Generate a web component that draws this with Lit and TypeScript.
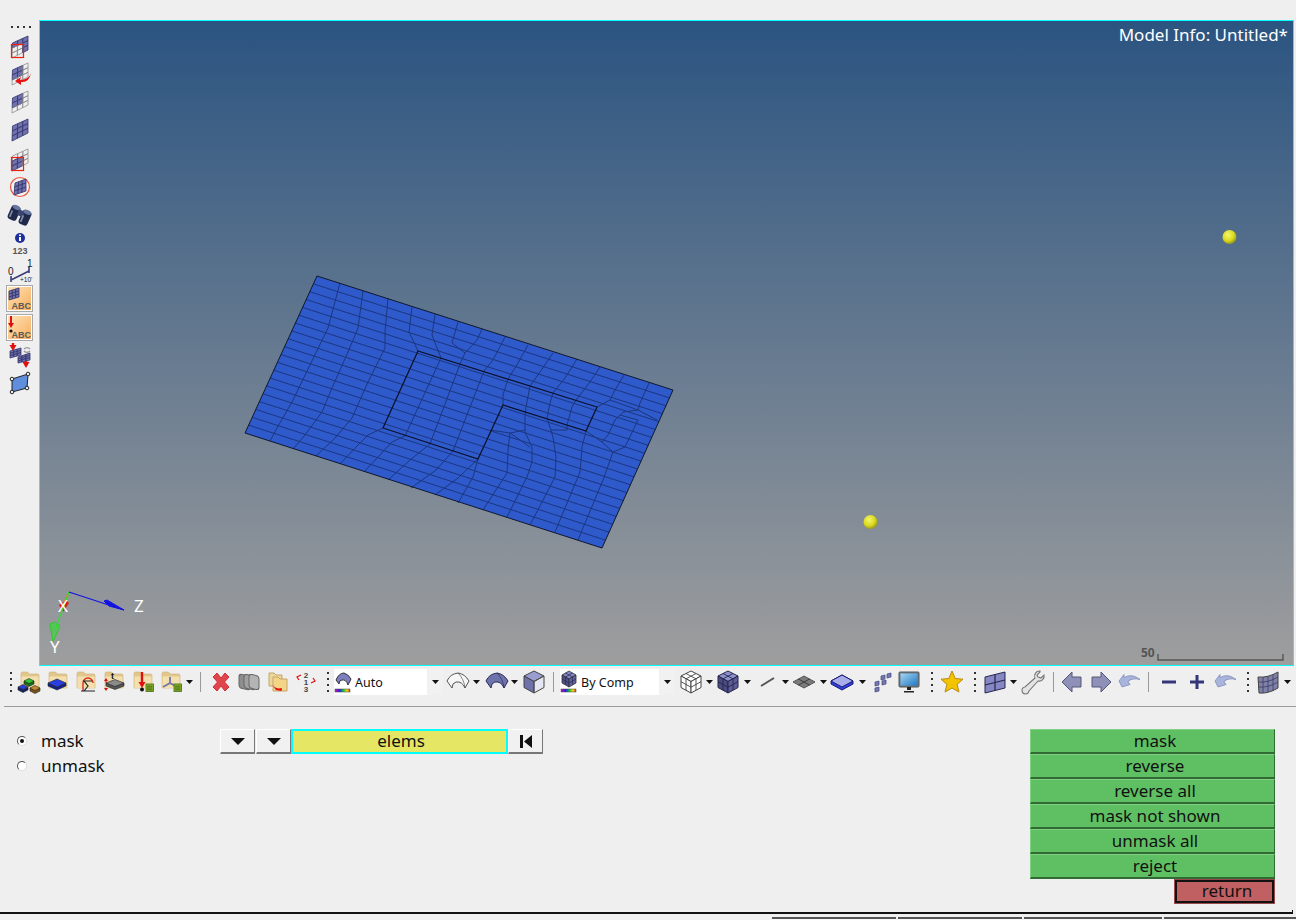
import { LitElement, html, css, svg } from "lit";
import { customElement } from "lit/decorators.js";

type Pt = [number, number];

// ---------- model canvas data (page coordinates) ----------
const QUAD: Pt[] = [[317, 276], [673, 390], [602, 548], [245, 433]];
const HOLE = "418,351 597,407 586,431 503,405 478,459 383,428";
const ROWS = 20;
const COLS = [
  "340,283 328,328 310,365 292,402 277,428 270,441",
  "363,291 358,328 348,352 332,388 322,412 305,435 293,449",
  "388,298 385,332 385,348 368,382 352,418 335,438 316,456",
  "412,307 409,332 418,351",
  "435,314 432,335 441,358",
  "458,322 452,343 465,353",
  "482,329 477,340 465,353 460,364",
  "505,337 493,360 484,371",
  "528,345 518,363 508,379 503,395 503,405",
  "553,353 540,372 530,386 526,407 525,415 525,432 532,447 532,462 527,477 507,517",
  "577,359 565,378 553,393 550,403 547,418 553,437 556,457 555,477 530,525",
  "600,367 590,382 576,400 572,407 567,425 567,430 550,430",
  "624,375 615,390 610,400 597,407",
  "649,383 640,403 638,410 623,412 615,420 608,435 602,442 613,452 603,480 578,540",
  "610,400 638,410 657,420",
  "638,420 620,415",
  "613,452 625,447 638,420",
  "602,442 586,431 582,447 580,472 555,532",
  "441,358 405,436",
  "460,364 430,444",
  "484,371 453,451",
  "383,428 368,435 358,445 340,464",
  "405,436 392,442 364,472",
  "430,444 410,460 388,480",
  "453,451 436,470 411,488",
  "478,459 458,478 435,495",
  "478,459 473,477 458,503",
  "490,430 510,433 508,450 507,473 483,510",
  "510,433 525,430",
  "510,433 530,447",
];

const lerp = (a: Pt, b: Pt, t: number): Pt => [a[0] + (b[0] - a[0]) * t, a[1] + (b[1] - a[1]) * t];

// ---------- icon helpers ----------
const MESH = "#6f71b0";
const MESH_LINE = "#34346a";

function patch(mask: string, q: Pt[] = [[6.5, 10], [22, 3], [22, 17], [6, 25]]) {
  const at = (u: number, v: number) => lerp(lerp(q[0], q[1], u), lerp(q[3], q[2], u), v);
  const cells = [];
  for (let r = 0; r < 3; r++) {
    for (let c = 0; c < 3; c++) {
      const on = mask[r * 3 + c] === "1";
      const pts = [at(c / 3, r / 3), at((c + 1) / 3, r / 3), at((c + 1) / 3, (r + 1) / 3), at(c / 3, (r + 1) / 3)];
      cells.push(svg`<polygon points=${pts.map((p) => p.join(",")).join(" ")}
        fill=${on ? MESH : "none"} stroke=${on ? MESH_LINE : "#8e8e8e"} stroke-width=".8"/>`);
    }
  }
  return cells;
}

function iso(top: string, left: string, right: string, line: string) {
  return svg`
    <polygon points="14,3 24,8 14,13.5 4,8" fill=${top} stroke=${line}/>
    <polygon points="4,8 14,13.5 14,25 4,19.5" fill=${left} stroke=${line}/>
    <polygon points="24,8 14,13.5 14,25 24,19.5" fill=${right} stroke=${line}/>`;
}

function isoGrid(top: string, left: string, right: string, line: string) {
  return svg`${iso(top, left, right, line)}
    <path d="M9 5.5 19 10.8M19 5.5 9 10.8M9 10.8V22.2M19 10.8V22.2M4 13.7 14 19.2 24 13.7" fill="none" stroke=${line} stroke-width=".9"/>`;
}

function slab(cx: number, cy: number, w: number, h: number, top: string, side: string, line = "#222") {
  const t = h / 2;
  return svg`
    <polygon points="${cx - w},${cy} ${cx},${cy + t} ${cx + w},${cy} ${cx + w},${cy + 3} ${cx},${cy + t + 3} ${cx - w},${cy + 3}" fill=${side} stroke=${line} stroke-width=".6"/>
    <polygon points="${cx - w},${cy} ${cx},${cy - t} ${cx + w},${cy} ${cx},${cy + t}" fill=${top} stroke=${line} stroke-width=".6"/>`;
}

const folderBack = svg`
  <path d="M6 5.5q0-1.5 1.5-1.5h5l2 2h8q1.500 0 1.500 1.500V20H6z" fill="#e2c78c" stroke="#cdb07a" stroke-width=".6"/>
  <path d="M6.500 8.500h17V20H6.500z" fill="#f4e0ae"/>`;

const greenList = svg`<rect x="18" y="16" width="7.500" height="7.500" fill="#8fb52c" stroke="#3f6a10" stroke-width=".8"/>
  <path d="M19 18.200h5.500M19 20h5.500M19 21.800h5.500" stroke="#2f5a10" stroke-width=".8"/>`;

const redDown = (x: number, y1: number, y2: number) => svg`
  <path d="M${x} ${y1}V${y2 - 5}" stroke="#e01010" stroke-width="2.400"/>
  <polygon points="${x - 3.500},${y2 - 6} ${x + 3.500},${y2 - 6} ${x},${y2}" fill="#e01010"/>`;

const icon = (body: unknown, w = 28, h = 28) =>
  html`<svg width=${w} height=${h} viewBox="0 0 ${w} ${h}">${body}</svg>`;

const caret = icon(svg`<polygon points="0,0 7,0 3.500,4" fill="#111"/>`, 7, 4);

const vdots = icon(svg`<path d="M3 1h2v2H3zM3 7h2v2H3zM3 13h2v2H3zM3 19h2v2H3z" fill="#333"/>`, 8, 22);

const orangeBox = (id: string, body: unknown) => icon(svg`
  <defs><linearGradient id=${id} x1="0" y1="0" x2="1" y2="1"><stop offset="0" stop-color="#fde3b8"/><stop offset="1" stop-color="#f9ae5e"/></linearGradient></defs>
  <rect x=".5" y=".5" width="26" height="26" fill="#fff" stroke="#a8a8a8"/>
  <rect x="2" y="2" width="23" height="23" fill="url(#${id})"/>
  ${body}
  <text x="25" y="24" text-anchor="end" class="abc">ABC</text>`, 28, 27);

const binoculars = icon(svg`
  <g transform="rotate(24 14 14)">
    <rect x="3" y="7" width="9.500" height="15" rx="3" fill="#20294a"/>
    <rect x="15" y="7" width="9.500" height="15" rx="3" fill="#20294a"/>
    <rect x="11" y="9" width="6" height="6" fill="#3b4670"/>
    <ellipse cx="7.700" cy="8.500" rx="4" ry="2.200" fill="#66769f"/>
    <ellipse cx="19.700" cy="8.500" rx="4" ry="2.200" fill="#66769f"/>
    <rect x="4.500" y="13" width="1.600" height="7" fill="#8190ae"/>
    <rect x="16.500" y="13" width="1.600" height="7" fill="#8190ae"/>
  </g>`);

const undoArrow = icon(svg`
  <path d="M4 13 9 6.500V9.500Q17 5 25 11.500 17 9.500 13 13.500L15 16.500 7 19z" fill="#a9b4dc" stroke="#7f8abb" stroke-width=".8"/>`);

const shell = (fill: string, line: string) => icon(svg`
  <path d="M3 13Q6 6 14 5 21 6 25 13L21 20Q18 13 12 14 8 15 8 20z" fill=${fill} stroke=${line}/>
  <path d="M14 5Q20 11 21 20" fill="none" stroke=${line} stroke-width=".7"/>`);

const colorbar = svg`<defs><linearGradient id="rb"><stop offset="0" stop-color="#e010c0"/><stop offset=".3" stop-color="#2020e0"/><stop offset=".55" stop-color="#10c040"/><stop offset=".8" stop-color="#f0e010"/><stop offset="1" stop-color="#f03010"/></linearGradient></defs>
  <rect x="1" y="19" width="15" height="3" fill="url(#rb)" stroke="#444" stroke-width=".5"/>`;

// ---------- left toolbar ----------
const redBox = svg`<rect x="5.500" y="11.500" width="12" height="13" fill="none" stroke="#ee2010" stroke-width="1.200"/>`;

const LEFT: { c: number; t: unknown }[] = [
  { c: 27, t: icon(svg`<path d="M5 1h2v2H5zM11 1h2v2h-2zM17 1h2v2h-2zM23 1h2v2h-2z" fill="#333"/>`, 28, 4) },
  { c: 47, t: icon(svg`${patch("111001001")}${redBox}`) },
  { c: 74, t: icon(svg`${patch("110110000")}
      <path d="M25 13Q23 20 14 20L15 17 9 21 15 25V22Q23 23 25 13z" fill="#e81010"/>`) },
  { c: 102, t: icon(patch("110110000")) },
  { c: 130, t: icon(patch("111111111")) },
  { c: 160, t: icon(svg`${patch("000110110")}${redBox}`) },
  { c: 187, t: icon(svg`<circle cx="14" cy="14" r="9.500" fill="#f2f2f2" stroke="#ee5540" stroke-width="1.200"/>
      ${patch("111111111", [[9, 10], [20, 6], [20, 18], [8, 22]])}`) },
  { c: 215, t: binoculars },
  { c: 245, t: icon(svg`<circle cx="14" cy="7" r="5" fill="#1c2f9a"/>
      <rect x="13" y="6" width="2" height="4" fill="#fff"/><rect x="13" y="3.500" width="2" height="1.500" fill="#fff"/>
      <text x="14" y="23" text-anchor="middle" class="n123">123</text>`) },
  { c: 273, t: icon(svg`
      <path d="M5 17V23M5 21 23 12M23 8V14" stroke="#3c3c78" stroke-width="1.600" fill="none"/>
      <text x="2" y="16" class="tiny">0</text><text x="21" y="8" class="tiny">1</text>
      <text x="14" y="23" class="tiny2">+10'</text>`) },
  { c: 298.5, t: orangeBox("o1", svg`
      ${patch("111111111", [[3, 6], [13, 3], [13, 12], [3, 15]])}`) },
  { c: 327, t: orangeBox("o2", svg`
      <path d="M5 2V10" stroke="#e01010" stroke-width="2"/><polygon points="2,9 8,9 5,14" fill="#e01010"/>
      <circle cx="5" cy="17" r="1.600" fill="#111"/>`) },
  { c: 354, t: icon(svg`
      ${patch("111111111", [[4, 11], [15, 8], [15, 15], [4, 18]])}
      ${patch("111111111", [[12, 17], [24, 13], [24, 20], [12, 23]])}
      ${redDown(7, 3, 11)}${redDown(20, 21, 28)}
      <path d="M18 9a4 4 0 0 1 6 0M24 11a4 4 0 0 1-6 0" fill="none" stroke="#999" stroke-width="1.400"/>`) },
  { c: 384, t: icon(svg`
      <polygon points="6,9 22,4 21,18 6,22" fill="#5f8fdc" stroke="#222"/>
      <circle cx="6" cy="9" r="1.800" fill="#eee" stroke="#222"/><circle cx="22" cy="4" r="1.800" fill="#eee" stroke="#222"/>
      <circle cx="21" cy="18" r="1.800" fill="#eee" stroke="#222"/><circle cx="6" cy="22" r="1.800" fill="#eee" stroke="#222"/>`) },
];

// ---------- bottom toolbar ----------
const combo = (label: string, ic: unknown) => html`
  <div class="combo">${ic}<span class="combo-label">${label}</span><span class="combo-arrow">${caret}</span></div>`;

const sep = html`<div class="sep"></div>`;

const BAR: { c: number; w: number; t: unknown }[] = [
  { c: 11, w: 8, t: vdots },
  { c: 29, w: 28, t: icon(svg`${folderBack}
      ${slab(8, 19, 5, 5, "#2a3fd8", "#14206a")}${slab(20, 20, 5, 5, "#c88a2c", "#7a5415")}${slab(14, 13, 5, 5, "#2fc82f", "#157015")}`) },
  { c: 57, w: 28, t: icon(svg`${folderBack}${slab(14, 15, 9, 8, "#2a3fe0", "#111f90")}`) },
  { c: 85, w: 28, t: icon(svg`${folderBack}
      <path d="M12 23V15a5 5 0 0 1 10 0" fill="none" stroke="#d83020" stroke-width="1.400"/>
      <path d="M10 23H24M13 23 17 18 13 13H21" fill="none" stroke="#222" stroke-width="1.200"/>`) },
  { c: 113, w: 28, t: icon(svg`${folderBack}
      <text x="12" y="11" class="t">t</text>
      ${slab(16, 15, 9, 7, "#8a8a8a", "#555")}
      <path d="M7 13v2M7 20v2" stroke="#d01010"/><polygon points="5,13 9,13 7,10" fill="#d01010"/><polygon points="5,20 9,20 7,23" fill="#d01010"/>`) },
  { c: 142, w: 29, t: icon(svg`${folderBack}${redDown(14, 4, 20)}<circle cx="14" cy="21.500" r="2" fill="#111"/>${greenList}`) },
  { c: 170, w: 28, t: icon(svg`${folderBack}
      <path d="M14 9V15L7 19M14 15 21 19" fill="none" stroke="#7274aa" stroke-width="1.800"/>${greenList}`) },
  { c: 189, w: 7, t: caret },
  { c: 200, w: 1, t: sep },
  { c: 221, w: 28, t: icon(svg`<path d="M6 9 10 5 14 10 18 5 22 9 17.500 14 22 19 18 23 14 18 10 23 6 19 10.500 14z" fill="#e0444c" stroke="#d03038"/>`) },
  { c: 249, w: 28, t: icon(svg`
      <g transform="skewY(12) translate(0 -3)">
        <rect x="4" y="8" width="11" height="14" rx="3" fill="#8e8e8e" stroke="#666"/>
        <rect x="9" y="7" width="11" height="14" rx="3" fill="#a0a0a0" stroke="#666"/>
        <rect x="14" y="6" width="10" height="14" rx="3" fill="#b4b4b4" stroke="#666"/>
      </g>`) },
  { c: 277, w: 28, t: icon(svg`
      <path d="M6 5h5l2 2h6v11H6z" fill="#ecd79a" stroke="#c4a56c"/>
      <path d="M10 9h5l2 2h7v12H10z" fill="#f4d486" stroke="#c4a56c"/>
      <path d="M8 14Q11 22 19 20L18.500 23 13 22 10 18z" fill="#e01010"/>`) },
  { c: 306, w: 30, t: icon(svg`
      <text x="14" y="9.500" class="num">2</text><text x="14" y="16.500" class="num">1</text><text x="14" y="24" class="num">3</text>
      <path d="M9 7 5 9l2 3M19 15l4-2-2-3" fill="none" stroke="#e01010" stroke-width="1.200"/>`) },
  { c: 328, w: 8, t: vdots },
  { c: 388.5, w: 109, t: combo("Auto", icon(svg`
      <path d="M2 10Q5 3 10 3 14 4 17 9L14 15Q12 9 8 10 5 10 5 14z" fill="#7b7fc0" stroke="#333"/>${colorbar}`, 18, 24)) },
  { c: 458, w: 28, t: shell("#f6f6f6", "#555") },
  { c: 476, w: 7, t: caret },
  { c: 497, w: 28, t: shell("#6f73ad", "#2b2b55") },
  { c: 514, w: 7, t: caret },
  { c: 533.5, w: 24, t: icon(svg`${iso("#9a9dd0", "#6f72a8", "#e6e6f2", "#444")}<path d="M14 13.500 24 8M14 25V13.500" stroke="#555"/>`) },
  { c: 553, w: 1, t: sep },
  { c: 617.5, w: 115, t: combo("By Comp", icon(svg`
      <polygon points="9,1 16,5 9,9 2,5" fill="#8487c0" stroke="#333" stroke-width=".8"/>
      <polygon points="2,5 9,9 9,17 2,13" fill="#4e4f86" stroke="#333" stroke-width=".8"/>
      <polygon points="16,5 9,9 9,17 16,13" fill="#5f61a0" stroke="#333" stroke-width=".8"/>
      <path d="M5.500 3 12.500 7M12.500 3 5.500 7M5.500 7V15M12.500 7V15M2 9l7 4 7-4" stroke="#2b2b55" stroke-width=".7" fill="none"/>${colorbar}`, 18, 24)) },
  { c: 691, w: 28, t: icon(isoGrid("#fff", "#fff", "#fff", "#444")) },
  { c: 709, w: 7, t: caret },
  { c: 728, w: 28, t: icon(isoGrid("#8e91cc", "#4a4b80", "#5c5d96", "#26264c")) },
  { c: 747, w: 7, t: caret },
  { c: 767, w: 28, t: icon(svg`<path d="M8 18 21 10" stroke="#555" stroke-width="2"/>`) },
  { c: 785, w: 7, t: caret },
  { c: 804, w: 28, t: icon(svg`<polygon points="3,14 14,8 25,14 14,20" fill="#7c7c7c" stroke="#555"/><path d="M8.500 11 19.500 17M19.500 11 8.500 17" stroke="#3c3c3c"/>`) },
  { c: 823, w: 7, t: caret },
  { c: 842, w: 28, t: icon(svg`
      <polygon points="3,13 14,7 25,13 25,16 14,22 3,16" fill="#2f3fe0" stroke="#1a1a70"/>
      <polygon points="3,13 14,7 25,13 14,19" fill="#a8adea" stroke="#1a1a70"/>`) },
  { c: 862, w: 7, t: caret },
  { c: 881, w: 28, t: icon(svg`<g fill="#7678b4" stroke="#44447a" stroke-width=".7">
      <polygon points="14,8 18,7 18,11 14,12"/><polygon points="20,6 24,5 24,9 20,10"/>
      <polygon points="8,14 12,13 12,17 8,18"/><polygon points="15,13 19,12 19,16 15,17"/>
      <polygon points="8,20 12,19 12,23 8,24"/></g>`) },
  { c: 909, w: 28, t: icon(svg`
      <defs><linearGradient id="scr" x1="0" y1="0" x2="1" y2="1"><stop offset="0" stop-color="#a6d6f2"/><stop offset="1" stop-color="#1f78c4"/></linearGradient></defs>
      <rect x="4" y="4" width="20" height="15" rx="1" fill="#6c7c88" stroke="#555"/>
      <rect x="5.500" y="5.500" width="17" height="12" fill="url(#scr)"/>
      <path d="M12 19h4v3h-4z" fill="#222"/><path d="M9 23h10v1.500H9z" fill="#222"/>`) },
  { c: 932, w: 8, t: vdots },
  { c: 952, w: 28, t: icon(svg`
      <polygon points="14,3 17.200,10.500 25,11.200 19,16.400 21,24 14,20 7,24 9,16.400 3,11.200 10.800,10.500" fill="#f4c400" stroke="#b88a10"/>`) },
  { c: 975, w: 8, t: vdots },
  { c: 995, w: 28, t: icon(svg`
      <polygon points="4,9 24,4 24,20 4,25" fill="#8688c4" stroke="#26264c"/>
      <path d="M14 6.500V22.500M4 17 24 12" stroke="#26264c" stroke-width="1.200"/>`) },
  { c: 1013, w: 7, t: caret },
  { c: 1033, w: 28, t: icon(svg`
      <path d="M21 3a5 5 0 0 0-5 7L6 19a3.500 3.500 0 1 0 4 4l9-10a5 5 0 0 0 6-6l-3 3-3-1-1-2 3-3z" fill="#e4e4e4" stroke="#777" stroke-width="1.100"/>`) },
  { c: 1053, w: 1, t: sep },
  { c: 1072, w: 28, t: icon(svg`<polygon points="4,14 14,4 14,9 23,9 23,19 14,19 14,24" fill="#8e90b8" stroke="#55577a"/>`) },
  { c: 1101, w: 28, t: icon(svg`<polygon points="24,14 14,4 14,9 5,9 5,19 14,19 14,24" fill="#8e90b8" stroke="#55577a"/>`) },
  { c: 1129, w: 28, t: undoArrow },
  { c: 1148, w: 1, t: sep },
  { c: 1169, w: 28, t: icon(svg`<rect x="7" y="12.500" width="14" height="3" fill="#34367a"/>`) },
  { c: 1197, w: 28, t: icon(svg`<path d="M7 12.500h5.500V7h3v5.500H21v3h-5.500V21h-3v-5.500H7z" fill="#34367a"/>`) },
  { c: 1225, w: 28, t: undoArrow },
  { c: 1248, w: 8, t: vdots },
  { c: 1268, w: 28, t: icon(svg`
      <path d="M4 9Q14 10 24 4V20Q14 26 5 25z" fill="#7f81a8" stroke="#444"/>
      <path d="M9 9V25M14 9V24M19 7V23M4.300 14Q14 15 24 9M4.600 19Q14 20 24 14" stroke="#3c3c60" stroke-width=".8" fill="none"/>`) },
  { c: 1287, w: 7, t: caret },
];

const GREEN = ["mask", "reverse", "reverse all", "mask not shown", "unmask all", "reject"];
const STATUS = [124, 124, 138, 132];

@customElement("app-root")
export class AppRoot extends LitElement {
  static styles = css`
    :host {
      display: block;
      width: 1296px;
      height: 920px;
      background: #efefef;
      font-family: "Noto Sans", sans-serif;
      font-size: 17px;
      color: #111;
      overflow: hidden;
    }
    .top {
      display: flex;
      height: 666px;
    }
    .side {
      width: 39px;
      flex: none;
      display: flex;
      flex-direction: column;
    }
    .side-cell {
      display: flex;
      justify-content: center;
      align-items: center;
      padding-left: 1px;
      flex: none;
    }
    .view {
      position: relative;
      width: 1253px;
      height: 644px;
      margin-top: 20px;
      border: 1px solid #0ff;
      background: linear-gradient(#2b5481, #9e9e9e);
      color: #fff;
    }
    .view svg {
      position: absolute;
      inset: 0;
    }
    .info {
      position: absolute;
      top: 3px;
      right: 5px;
      line-height: 22px;
    }
    .axis {
      position: absolute;
      line-height: 20px;
    }
    .ax-x { left: 18px; top: 575px; }
    .ax-z { left: 94px; top: 575px; }
    .ax-y { left: 10px; top: 616px; }
    .scale {
      position: absolute;
      left: 1101px;
      top: 624px;
      font-size: 12px;
      font-weight: 700;
      color: #555;
      line-height: 16px;
    }
    .bar {
      display: flex;
      align-items: center;
      height: 32px;
      margin-bottom: 8px;
    }
    .cell {
      display: flex;
      justify-content: center;
      align-items: center;
      flex: none;
      height: 32px;
    }
    .cell svg, .side-cell svg {
      flex: none;
      display: block;
    }
    .sep {
      width: 1px;
      height: 20px;
      background: #9a9a9a;
    }
    .combo {
      display: flex;
      align-items: center;
      width: 100%;
      height: 26px;
      background: #fff;
    }
    .combo-label {
      flex: 1;
      font-size: 12.5px;
      padding-left: 3px;
    }
    .combo-arrow {
      width: 16px;
      height: 26px;
      background: #f1f1f1;
      display: flex;
      align-items: center;
      justify-content: center;
    }
    .rule {
      height: 1px;
      background: #9c9c9c;
      margin-left: 4px;
    }
    .panel {
      display: flex;
      height: 205px;
    }
    .radios {
      width: 220px;
      flex: none;
      padding: 21px 0 0 17px;
      box-sizing: border-box;
    }
    .radio {
      display: flex;
      align-items: center;
      gap: 14px;
      height: 25px;
    }
    .dot {
      width: 10px;
      height: 10px;
      border-radius: 50%;
      background: #fff;
      box-sizing: border-box;
      border: 1px solid;
      border-color: #555 #ddd #ddd #555;
      display: flex;
      align-items: center;
      justify-content: center;
    }
    .dot.on::after {
      content: "";
      width: 4px;
      height: 4px;
      border-radius: 50%;
      background: #111;
    }
    .selector {
      display: flex;
      height: 25px;
      margin-top: 22px;
      flex: none;
    }
    .raised {
      width: 35px;
      box-sizing: border-box;
      background: #f1f1f1;
      border: 1px solid;
      border-color: #fff #777 #777 #fff;
      border-bottom-width: 2px;
      display: flex;
      align-items: center;
      justify-content: center;
    }
    .raised + .raised {
      margin-left: 1px;
    }
    .entity {
      width: 217px;
      box-sizing: border-box;
      border: 2px solid #0ff;
      background: #e6e665;
      text-align: center;
      line-height: 19px;
      padding-left: 3px;
    }
    .actions {
      margin: 22px 0 0 487px;
      width: 245px;
      flex: none;
    }
    .green, .red {
      box-sizing: border-box;
      height: 25px;
      text-align: center;
      line-height: 21px;
      border: 1px solid;
    }
    .green {
      background: #5fc063;
      border-color: #7fd080 #2f6b33 #2f6b33 #7fd080;
      border-bottom-width: 2px;
      padding-left: 5px;
    }
    .red {
      width: 101px;
      margin-left: auto;
      background: #c16062;
      border-color: #9a4a4c;
      outline: 2px solid #111;
      outline-offset: -3px;
      padding-left: 5px;
    }
    .baseline {
      height: 2px;
      margin-right: 3px;
      background: #111;
      position: relative;
    }
    .baseline::after {
      content: "";
      position: absolute;
      right: 0;
      top: -2px;
      width: 1px;
      height: 2px;
      background: #111;
    }
    .status {
      display: flex;
      justify-content: flex-end;
      gap: 2px;
      margin-top: 3px;
    }
    .status div {
      height: 3px;
      background: #f6f6f6;
      border-top: 2px solid #555;
    }
    .abc { font: 700 9px "Liberation Sans", sans-serif; fill: #5a5a5a; }
    .n123 { font: 700 9px "Liberation Sans", sans-serif; fill: #555; }
    .tiny { font: 10px "Liberation Sans", sans-serif; fill: #222; }
    .tiny2 { font: 6.500px "Liberation Sans", sans-serif; fill: #222; }
    .t { font: 700 9px "Liberation Sans", sans-serif; fill: #111; }
    .num { font: 700 8px "Liberation Sans", sans-serif; fill: #444; text-anchor: middle; }
  `;

  private renderMesh() {
    const rows = [];
    for (let i = 1; i < ROWS; i++) {
      const a = lerp(QUAD[0], QUAD[3], i / ROWS);
      const b = lerp(QUAD[1], QUAD[2], i / ROWS);
      rows.push(svg`<line x1=${a[0]} y1=${a[1]} x2=${b[0]} y2=${b[1]}/>`);
    }
    return html`<svg width="1253" height="644" viewBox="40 21 1253 644">
      <defs>
        <radialGradient id="ball" cx=".4" cy=".35" r=".7">
          <stop offset="0" stop-color="#f6f86a"/><stop offset=".6" stop-color="#d8d820"/><stop offset="1" stop-color="#8e8e18"/>
        </radialGradient>
      </defs>
      <polygon points=${QUAD.map((p) => p.join(",")).join(" ")} fill="#2f5acb"/>
      <g stroke="#1c3780" stroke-width="1" fill="none">
        ${rows}
        ${COLS.map((c) => svg`<polyline points=${c}/>`)}
      </g>
      <polygon points=${HOLE} fill="none" stroke="#0a0f26" stroke-width="1.200"/>
      <polygon points=${QUAD.map((p) => p.join(",")).join(" ")} fill="none" stroke="#10182e" stroke-width="1"/>
      <circle cx="1229.500" cy="237" r="7" fill="url(#ball)"/>
      <circle cx="870.500" cy="522" r="7" fill="url(#ball)"/>
      <path d="M66 600 59 605 63 612 69 603z" fill="#e01818"/>
      <path d="M69 592 62 607" stroke="#e08018" stroke-width="1.600"/>
      <path d="M69 592 55 630" stroke="#30e030" stroke-width="1.200"/>
      <path d="M55 622 60 626 53 642 50 624z" fill="#2ee02e" fill-opacity=".6" stroke="#20d020" stroke-width=".8"/>
      <path d="M69 592 124 610" stroke="#1414e0" stroke-width="1.200"/>
      <path d="M104 601 109 606 124 610 107 600z" fill="#1414e0" stroke="#1414e0"/>
      <path d="M1158 654V660H1283V654" fill="none" stroke="#555" stroke-width="1.400"/>
    </svg>`;
  }

  render() {
    let y = 0;
    let x = 0;
    return html`
      <div class="top">
        <div class="side">
          ${LEFT.map((it) => {
            const h = it.c === 27 ? 4 : 28;
            const gap = it.c - h / 2 - y;
            y = it.c + h / 2;
            return html`<div class="side-cell" style="margin-top:${gap}px;height:${h}px">${it.t}</div>`;
          })}
        </div>
        <div class="view">
          ${this.renderMesh()}
          <div class="info">Model Info: Untitled*</div>
          <div class="axis ax-x">X</div>
          <div class="axis ax-z">Z</div>
          <div class="axis ax-y">Y</div>
          <div class="scale">50</div>
        </div>
      </div>
      <div class="bar">
        ${BAR.map((it) => {
          const left = it.c - it.w / 2;
          const gap = left - x;
          x = left + it.w;
          return html`<div class="cell" style="margin-left:${gap}px;width:${it.w}px">${it.t}</div>`;
        })}
      </div>
      <div class="rule"></div>
      <div class="panel">
        <div class="radios">
          <div class="radio"><span class="dot on"></span>mask</div>
          <div class="radio"><span class="dot"></span>unmask</div>
        </div>
        <div class="selector">
          <div class="raised">${icon(svg`<polygon points="0,0 14,0 7,7" fill="#111"/>`, 14, 7)}</div>
          <div class="raised">${icon(svg`<polygon points="0,0 14,0 7,7" fill="#111"/>`, 14, 7)}</div>
          <div class="entity">elems</div>
          <div class="raised">${icon(svg`<path d="M0 0h3v13H0zM12 0v13L4 6.500z" fill="#111"/>`, 12, 13)}</div>
        </div>
        <div class="actions">
          ${GREEN.map((g) => html`<div class="green">${g}</div>`)}
          <div class="red">return</div>
        </div>
      </div>
      <div class="baseline"></div>
      <div class="status">
        ${STATUS.map((w) => html`<div style="width:${w}px"></div>`)}
      </div>
    `;
  }
}
